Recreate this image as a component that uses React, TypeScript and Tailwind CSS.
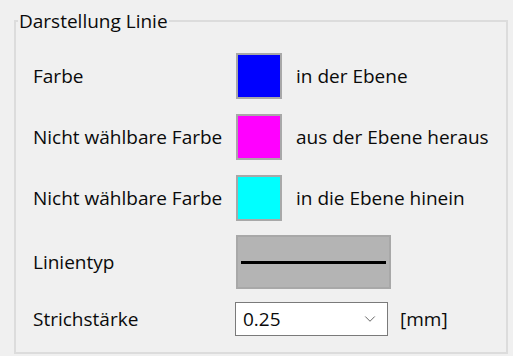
import { ChevronDown } from "lucide-react";

const font = { fontFamily: "'Open Sans', 'Noto Sans', sans-serif" };

function Swatch({ color }: { color: string }) {
  return <div className={`w-[46px] h-[46px] border-2 border-[#a8a8a8] ${color}`} />;
}

export default function App() {
  const rows = [
    { label: "Farbe", color: "bg-[#0000ff]", text: "in der Ebene" },
    { label: "Nicht wählbare Farbe", color: "bg-[#ff00ff]", text: "aus der Ebene heraus" },
    { label: "Nicht wählbare Farbe", color: "bg-[#00ffff]", text: "in die Ebene hinein" },
  ];

  return (
    <div className="w-[513px] h-[356px] bg-[#f0f0f0] text-[19px] text-[#0a0a0a] pt-[10px] pl-[14px]" style={font}>
      <fieldset className="w-[494px] h-[344px] border-2 border-[#dcdcdc] pl-[17px] pt-[21px]">
        <legend className="ml-[-15px] px-[1px] leading-[22px]">Darstellung Linie</legend>
        <div className="flex flex-col gap-[15px]">
          {rows.map((r, i) => (
            <div key={i} className="flex items-center">
              <span className="w-[203px]">{r.label}</span>
              <Swatch color={r.color} />
              <span className="ml-[14px]">{r.text}</span>
            </div>
          ))}
        </div>
        <div className="flex items-center mt-[14px]">
          <span className="w-[203px]">Linientyp</span>
          <div className="w-[155px] h-[54px] border-2 border-[#a8a8a8] bg-[#b4b4b4] flex items-center px-[3px]">
            <div className="w-full h-[3px] bg-black" />
          </div>
        </div>
        <div className="flex items-center mt-[13px]">
          <span className="w-[202px]">Strichstärke</span>
          <div className="w-[153px] h-[34px] border border-[#7a7a7a] bg-white flex items-center justify-between pl-[7px] pr-[8px]">
            <span>0.25</span>
            <ChevronDown size={18} strokeWidth={1.2} className="text-[#555]" />
          </div>
          <span className="ml-[12px]">[mm]</span>
        </div>
      </fieldset>
    </div>
  );
}
